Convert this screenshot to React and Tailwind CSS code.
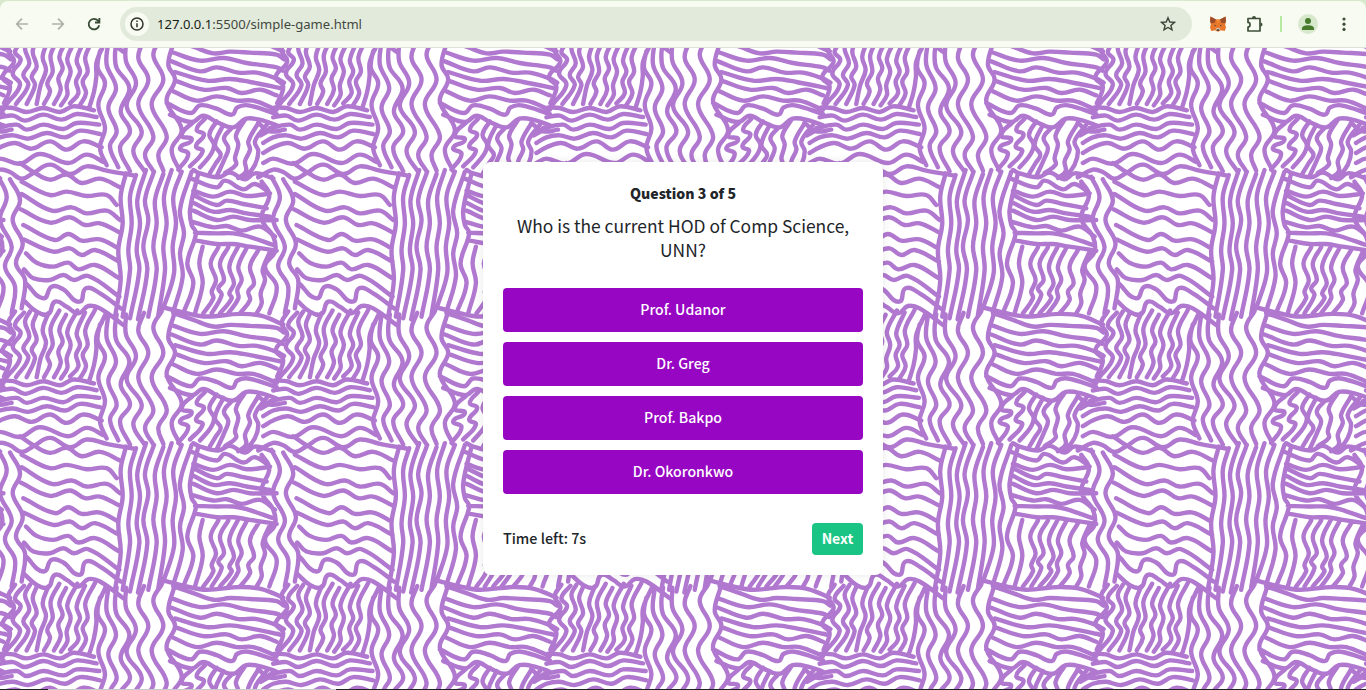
import React from "react";

const ARTS = [
  // short upright squiggles, top left
  [-94, [
    "45,65 25,100 42,135 8,180 30,210 12,260",
    "72,68 45,105 62,130 38,170 60,205 20,262",
    "90,65 75,95 88,140 70,175 85,205 48,262",
    "110,72 98,105 110,150 95,180 105,205 80,262",
    "145,70 128,120 138,160 122,205 110,262",
    "178,62 152,115 158,165 142,200 150,225 132,262",
    "198,75 178,120 188,155 175,185 182,220 162,262",
    "232,62 202,125 212,165 200,205 202,235 183,266",
    "255,68 230,130 240,165 228,195 235,230 210,260",
    "285,60 256,120 263,165 248,195 258,230 240,265",
    "318,70 290,135 289,180 282,225 268,272",
    "480,50 560,70 620,80 720,72 785,78 850,104",
    "520,70 580,90 640,110 690,105 750,108 830,114 852,128",
  ]],
  // tall waves, wide waves and zigzags of the upper half
  [0, [
    "305,5 300,10 293,60 315,105 295,170 315,240 300,300 320,352",
    "325,-20 320,50 348,120 325,180 350,250 330,295 355,358",
    "350,-20 345,20 350,60 388,120 362,190 390,250 360,300 390,370",
    "378,-20 378,40 408,105 380,175 425,250 400,310 435,372",
    "432,-25 415,30 445,95 415,170 460,265 435,320 460,370",
    "485,-30 460,20 490,95 455,170 500,265 475,320 490,368",
    "522,-20 505,50 525,95 500,160 545,245 515,305 540,370",
    "515,12 600,38 670,30 740,45 830,58 848,68",
    "515,40 600,70 650,58 715,74 770,74 830,92 852,104",
    "525,72 620,98 690,93 750,102 830,118 845,122",
    "525,98 610,125 680,120 725,135 780,125 830,142",
    "520,130 590,158 650,145 710,158 760,158 830,185",
    "500,165 572,195 600,172 650,182 696,200 712,178 745,172 830,198",
    "510,200 575,222 610,203 650,222 700,238 738,212 790,218 830,232",
    "5,178 40,180 80,192 130,180 180,192 220,175 282,187",
    "0,208 40,203 75,218 130,200 185,215 230,198 290,207",
    "-10,240 50,230 80,245 130,230 190,243 230,225 298,230",
    "-30,285 0,268 40,262 85,272 140,255 195,268 240,248 300,258",
    "-30,315 0,298 45,285 95,302 150,280 200,305 250,280 305,298",
    "-30,345 0,332 60,347 120,318 205,345 260,320 310,342",
    "-45,388 0,365 30,372 65,392 100,375 150,350 210,378 260,355 320,368 400,382",
    "60,345 100,372 150,395 200,380 245,405 300,392 360,418",
    "580,222 545,262 575,275 540,300 565,318 535,365",
    "615,212 590,245 612,260 588,295 608,310 570,355",
    "650,220 628,260 642,290 632,320 600,358",
    "670,230 645,290 662,320 648,345 630,375",
    "695,240 672,270 685,300 675,330 650,385",
    "735,215 708,262 715,290 705,330 708,350 675,375",
    "775,225 745,280 750,305 735,340 738,370 715,390",
    "800,230 765,280 775,310 765,350 735,390",
    "782,262 830,235",
    "-45,225 -10,250 35,245",
  ]],
  // long upright strands and the fields of waves of the lower half
  [366, [
    "378,10 362,80 368,160 355,240 362,330 345,440",
    "408,15 390,80 395,160 385,240 390,300 368,440",
    "438,0 412,90 420,160 410,240 418,300 390,445",
    "462,5 435,90 445,150 430,230 442,300 414,448",
    "490,12 465,90 470,160 460,230 470,300 445,440",
    "515,0 492,80 500,160 490,230 495,300 475,435",
    "545,5 520,80 528,160 518,230 522,310 490,415",
    "575,5 540,120 552,190 540,250 548,320 520,425",
    "595,10 570,120 575,165 588,190 562,280 580,340 550,430",
    "580,0 600,10 655,22 690,8 735,28 765,10 820,25",
    "572,25 650,52 675,32 730,58 765,42 810,70",
    "580,62 640,80 690,65 740,78 800,72",
    "580,75 650,105 680,92 730,102 800,115",
    "580,98 640,125 690,120 740,130 810,140",
    "580,122 650,150 700,140 750,150 830,150",
    "575,155 640,172 680,168 725,182 780,170 825,200",
    "585,188 650,190 700,190 740,198 820,225",
    "590,212 650,222 700,222 750,230 830,242",
    "785,35 808,75 785,145 820,200 825,245 795,290 830,350 808,430",
    "608,230 598,280 608,340 585,430",
    "655,232 632,280 648,330 635,365 640,385 610,430",
    "685,232 660,280 672,330 655,355 665,375 635,430",
    "715,228 688,290 702,340 688,370 695,385 660,430",
    "742,230 715,290 725,330 712,360 715,385 685,430",
    "775,240 750,290 762,340 745,365 750,390 720,430",
    "810,245 788,300 795,330 782,370 785,400 770,430",
    "-5,20 20,80 0,150 35,230 15,290 45,350 35,430",
    "30,28 60,90 38,150 68,220 48,280 75,330 65,415",
    "65,35 150,75 200,65 260,78 320,75 350,105",
    "65,72 155,122 215,112 260,130 320,122 360,150",
    "62,118 150,158 210,142 255,165 300,160 360,188",
    "70,165 165,210 205,192 245,212 300,208 355,235",
    "70,208 160,245 210,235 245,255 285,240 358,275",
    "78,250 110,278 160,290 205,278 235,298 285,285 358,325",
    "72,298 100,325 150,330 190,315 222,330 265,318 358,380",
    "78,340 130,385 155,350 190,358 238,395 258,355 300,370 362,415",
    "70,390 110,425 145,432 165,395 200,410 235,430 265,408 300,415 370,465",
  ]],
];

// Smooth curve through all the points of a stroke; handles are scaled to the
// length of their own segment so that the crests stay round
function curve(text, dy) {
  const p = text.split(" ").map((s) => {
    const [x, y] = s.split(",").map(Number);
    return [x / 3, (y + dy) / 3];
  });
  const last = p.length - 1;
  const dir = (i) => {
    const a = p[Math.max(i - 1, 0)];
    const c = p[Math.min(i + 1, last)];
    const n = Math.hypot(c[0] - a[0], c[1] - a[1]) || 1;
    return [(c[0] - a[0]) / n, (c[1] - a[1]) / n];
  };
  let d = `M${p[0][0]} ${p[0][1]}`;
  for (let i = 0; i < last; i++) {
    const b = p[i];
    const c = p[i + 1];
    const len = Math.hypot(c[0] - b[0], c[1] - b[1]) * 0.38;
    const u = dir(i);
    const v = dir(i + 1);
    d += `C${b[0] + u[0] * len} ${b[1] + u[1] * len} ${c[0] - v[0] * len} ${c[1] - v[1] * len} ${c[0]} ${c[1]}`;
  }
  return d;
}

const PATH = ARTS.map(([dy, list]) => list.map((s) => curve(s, dy)).join("")).join("");
const SIZE = 273.2;

function Pattern() {
  const tiles = [];
  for (let r = -1; r < 3; r++) for (let c = -1; c < 6; c++) tiles.push([c * SIZE, r * SIZE]);
  return (
    <svg className="absolute inset-0 h-full w-full" fill="none" stroke="#b178d0" strokeWidth="4.4" strokeLinecap="round" strokeLinejoin="round">
      <defs><path id="tile" d={PATH} /></defs>
      {tiles.map(([x, y]) => <use key={`${x},${y}`} href="#tile" x={x} y={y} />)}
    </svg>
  );
}

function Toolbar() {
  return (
    <div className="h-12 shrink-0 bg-[#d7e8cc] pt-px">
      <div className="flex h-[47px] items-center rounded-t-lg border-b border-[#dde3d7] bg-[#f8fbf2] text-[#43483f]">
        <svg className="ml-[14px] h-4 w-4" viewBox="0 0 16 16" fill="none" stroke="#aeb2a9" strokeWidth="1.7"><path d="M14 8H3M8 2.7 2.7 8 8 13.3" /></svg>
        <svg className="ml-5 h-4 w-4" viewBox="0 0 16 16" fill="none" stroke="#aeb2a9" strokeWidth="1.7"><path d="M2 8h11M8 2.7 13.3 8 8 13.3" /></svg>
        <svg className="ml-5 h-4 w-4" viewBox="0 0 16 16" fill="none" stroke="#394b35" strokeWidth="1.8"><path d="M13.2 9.2A5.3 5.3 0 1 1 12 4.6L13.5 6M13.4 2v4.5H9" /></svg>
        <div className="ml-[18px] flex h-[34px] w-[1072px] items-center rounded-full bg-[#e2ebdb] pr-4 pl-[5px]">
          <div className="flex h-6 w-6 items-center justify-center rounded-full bg-[#f8fbf2]">
            <svg className="h-[14px] w-[14px]" viewBox="0 0 14 14" fill="none" stroke="#2f332c" strokeWidth="1.5"><circle cx="7" cy="7" r="6" /><path d="M7 6.2v4M7 3.6v1.5" /></svg>
          </div>
          <div className="ml-2 flex-1 font-['Noto_Sans',sans-serif] text-[13.05px] leading-5 whitespace-nowrap text-[#43483f]"><span className="text-[#191d17]">127.0.0.1</span>:5500/simple-game.html</div>
          <svg className="h-4 w-4" viewBox="0 0 16 16" fill="none" stroke="#3c4439" strokeWidth="1.4"><path d="m8 1.8 1.8 4.2 4.6.4-3.5 3 1.1 4.5L8 11.500l-4 2.4 1.100-4.500-3.500-3L6.200 6z" /></svg>
        </div>
        <svg className="ml-[17px] h-4 w-[18px]" viewBox="0 0 18 16">
          <path d="M1.500.5 7 3.500h4L16.500.5 17 5l-.8 3.500.8 3-1.300 3.500-4-.8L10 15.500H8l-1.700-1.300-4 .8L1 11.500l.8-3L1 5z" fill="#e8772b" />
          <path d="M1.500.5 7 3.500 5.500 7 2 7.300 1 5zM16.500.5 11 3.500 12.500 7l3.500.3L17 5z" fill="#9a4d28" />
          <path d="m7 3.500 2 4 2-4z" fill="#f58a35" />
          <path d="m4.700 8.700 2.300.6-.3 1zM13.300 8.700l-2.300.6.3 1z" fill="#34373b" />
          <path d="m6.500 13 1.500-1h2l1.500 1L10 14.300H8z" fill="#d9c5b5" /><path d="M7.800 13.300h2.400v1.500H7.800z" fill="#34373b" />
        </svg>
        <svg className="ml-[19px] h-[18px] w-[18px]" viewBox="0 0 18 18" fill="none" stroke="#3d4f39" strokeWidth="1.700" strokeLinejoin="round">
          <path d="M2 3.500h12v12.500H2v-4c2.700 0 2.700-4.600 0-4.600z" /><path d="M6 3a2 2 0 0 1 4 0zM14.500 7.500a2 2 0 0 1 0 4z" fill="#3d4f39" stroke="none" />
        </svg>
        <div className="ml-4 h-4 w-0.5 bg-[#b5eaa0]" />
        <div className="ml-4 flex h-5 w-5 items-center justify-center rounded-full bg-[#d7e8cd]">
          <svg className="h-3 w-3" viewBox="0 0 12 12" fill="#457b2b"><circle cx="6" cy="3" r="3" /><path d="M0 12V10.300C0 8 3.500 7.200 6 7.200s6 .8 6 3.100V12z" /></svg>
        </div>
        <svg className="ml-[18px] h-4 w-4" viewBox="0 0 16 16" fill="#3d4f39"><circle cx="8" cy="3" r="1.600" /><circle cx="8" cy="8.200" r="1.600" /><circle cx="8" cy="13.400" r="1.600" /></svg>
      </div>
    </div>
  );
}

const OPTIONS = ["Prof. Udanor", "Dr. Greg", "Prof. Bakpo", "Dr. Okoronkwo"];

export default function App() {
  return (
    <div className="flex h-[690px] w-[1366px] flex-col overflow-hidden bg-white">
      <Toolbar />
      <main className="relative flex flex-1 items-start justify-center overflow-hidden pt-[114px]">
        <Pattern />
        <section className="relative flex h-[413px] w-[400px] flex-col rounded-lg bg-white px-5 pt-[19px] font-['Noto_Sans_CJK_JP',sans-serif] text-[#212529] shadow-[0_0_10px_rgba(0,0,0,0.1)]">
          <h1 className="text-center text-[14.1px] leading-6 font-black">Question 3 of 5</h1>
          <p className="mt-[9px] text-center text-[17.4px] leading-6">Who is the current HOD of Comp Science, UNN?</p>
          <div className="mt-[26px] flex flex-col gap-2.5">
            {OPTIONS.map((o) => <button key={o} className="h-11 rounded bg-[#9706c3] pb-px text-[14.1px] font-medium text-white">{o}</button>)}
          </div>
          <div className="mt-[29px] flex h-8 items-center justify-between">
            <span className="pb-[3px] text-[14.3px] font-medium">Time left: 7s</span>
            <button className="h-8 w-[51px] rounded bg-[#1ac484] pb-px text-[14px] font-bold text-white">Next</button>
          </div>
        </section>
      </main>
      <div className="flex h-px shrink-0 bg-[#202020]"><div className="ml-12 w-72 bg-[#c9c9c9]" /></div>
    </div>
  );
}
